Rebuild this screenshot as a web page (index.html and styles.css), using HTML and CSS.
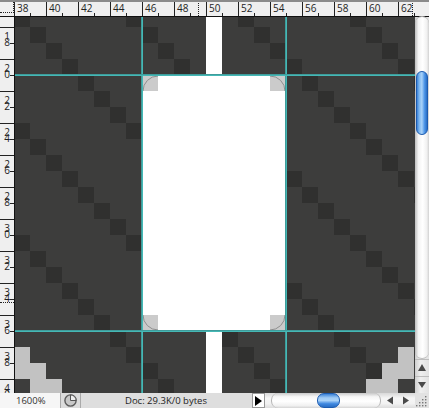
FILE: index.html
```html
<!DOCTYPE html>
<html lang="en">
<head>
<meta charset="utf-8">
<title>Document window</title>
<link rel="stylesheet" href="styles.css">
</head>
<body>
<div class="window">
  <div class="ruler-top">
    <div class="corner"></div>
    <div class="ruler-h">
      <span class="hm">38</span><span class="hm">40</span><span class="hm">42</span><span class="hm">44</span><span class="hm">46</span><span class="hm">48</span><span class="hm">50</span><span class="hm">52</span><span class="hm">54</span><span class="hm">56</span><span class="hm">58</span><span class="hm">60</span><span class="hm">62</span>
      <i class="cursor-h"></i>
      <i class="cursor-h end"></i>
    </div>
  </div>
  <div class="middle">
    <div class="ruler-v">
      <span class="vm"><b>18</b></span><span class="vm"><b>20</b></span><span class="vm"><b>22</b></span><span class="vm"><b>24</b></span><span class="vm"><b>26</b></span><span class="vm"><b>28</b></span><span class="vm"><b>30</b></span><span class="vm"><b>32</b></span><span class="vm"><b>34</b></span><span class="vm"><b>36</b></span><span class="vm"><b>38</b></span><span class="vm"><b>40</b></span>
      <i class="cursor-v"></i>
    </div>
    <div class="canvas">
      <svg class="art" width="400" height="376" viewBox="0 0 400 376" aria-hidden="true">
        <defs>
          <pattern id="diag" x="-1" y="-6" width="112" height="112" patternUnits="userSpaceOnUse">
            <rect x="0" y="0" width="16" height="16"/>
            <rect x="16" y="16" width="16" height="16"/>
            <rect x="32" y="32" width="16" height="16"/>
            <rect x="48" y="48" width="16" height="16"/>
            <rect x="64" y="64" width="16" height="16"/>
            <rect x="80" y="80" width="16" height="16"/>
            <rect x="96" y="96" width="16" height="16"/>
          </pattern>
        </defs>
        <rect class="base" width="400" height="376"/>
        <rect class="dark" width="400" height="376" fill="url(#diag)"/>
        <rect class="paper" x="191" y="-6" width="16" height="64"/>
        <rect class="paper" x="191" y="314" width="16" height="64"/>
        <rect class="paper" x="127" y="58" width="144" height="256"/>
        <g class="corners">
          <rect x="127" y="58" width="16" height="16"/>
          <rect x="255" y="58" width="16" height="16"/>
          <rect x="127" y="298" width="16" height="16"/>
          <rect x="255" y="298" width="16" height="16"/>
        </g>
        <g class="stairs">
          <rect x="0" y="330" width="15" height="32"/>
          <rect x="15" y="346" width="16" height="32"/>
          <rect x="31" y="362" width="16" height="16"/>
          <rect x="383" y="330" width="16" height="32"/>
          <rect x="367" y="346" width="16" height="32"/>
          <rect x="351" y="362" width="16" height="16"/>
        </g>
        <g class="arc">
          <path d="M128 74 A15 15 0 0 1 143 59"/>
          <path d="M255 59 A15 15 0 0 1 270 74"/>
          <path d="M128 298 A15 15 0 0 0 143 313"/>
          <path d="M255 313 A15 15 0 0 0 270 298"/>
        </g>
      </svg>
      <i class="guide gv g1"></i>
      <i class="guide gv g2"></i>
      <i class="guide gh g3"></i>
      <i class="guide gh g4"></i>
    </div>
    <div class="vscroll">
      <div class="vtrack">
        <div class="vthumb"></div>
      </div>
      <div class="varrow">
        <svg width="14" height="16" viewBox="0 0 14 16" aria-hidden="true"><path class="arrow" d="M7 4 L11 11 H3 Z"/></svg>
      </div>
      <div class="varrow">
        <svg width="14" height="16" viewBox="0 0 14 16" aria-hidden="true"><path class="arrow" d="M3 5 H11 L7 11 Z"/></svg>
      </div>
    </div>
  </div>
  <div class="status">
    <div class="zoom">1600%</div>
    <div class="clock">
      <svg width="15" height="15" viewBox="0 0 15 15" aria-hidden="true">
        <circle class="clock-face" cx="7.5" cy="7.5" r="5.6"/>
        <path class="clock-hand" d="M7.5 7.5 V1.9 A5.6 5.6 0 0 1 13.1 7.5 Z"/>
      </svg>
    </div>
    <div class="doc">Doc: 29.3K/0 bytes</div>
    <div class="menu-btn">
      <svg width="7" height="10" viewBox="0 0 7 10" aria-hidden="true"><path d="M0 0 L7 5 L0 10 Z"/></svg>
    </div>
    <div class="hscroll">
      <div class="htrack"><div class="hthumb"></div></div>
      <div class="harrows">
        <svg width="30" height="15" viewBox="0 0 30 15" aria-hidden="true">
          <path class="arrow" d="M2 7.5 L8 3.5 V11.5 Z"/>
          <path class="arrow" d="M18 3.5 L24 7.5 L18 11.5 Z"/>
        </svg>
      </div>
    </div>
    <div class="grip">
      <svg width="14" height="15" viewBox="0 0 14 15" aria-hidden="true">
        <g class="grip-dots">
          <rect x="10" y="3" width="1.4" height="1.4"/>
          <rect x="7" y="6" width="1.4" height="1.4"/><rect x="10" y="6" width="1.4" height="1.4"/>
          <rect x="4" y="9" width="1.4" height="1.4"/><rect x="7" y="9" width="1.4" height="1.4"/><rect x="10" y="9" width="1.4" height="1.4"/>
          <rect x="1" y="12" width="1.4" height="1.4"/><rect x="4" y="12" width="1.4" height="1.4"/><rect x="7" y="12" width="1.4" height="1.4"/><rect x="10" y="12" width="1.4" height="1.4"/>
        </g>
      </svg>
    </div>
  </div>
</div>
</body>
</html>
```
FILE: styles.css
```css
* { box-sizing: border-box; }
html, body { margin: 0; padding: 0; }
body { width: 429px; height: 408px; overflow: hidden; background: #e4e4e4; font-family: "Open Sans", sans-serif; color: #222; }
.window { width: 429px; height: 408px; display: flex; flex-direction: column; }

.ruler-top { height: 17px; display: flex; background: #efefef; border-top: 2px solid #8a8a8a; border-bottom: 1px solid #111; flex: none; }
.corner { width: 14px; flex: none; border-bottom: 1px dotted #222; border-right: 1px dotted #222; height: 11px; }
.ruler-h { flex: 1; display: flex; position: relative; overflow: hidden; }
.hm { flex: none; width: 32px; height: 14px; border-left: 1px solid #222; padding-left: 2px; font-size: 10px; line-height: 13px; position: relative; }
.hm::after { content: ""; position: absolute; left: 15px; bottom: 0; width: 1px; height: 3px; background: #222; }
.cursor-h { position: absolute; left: 184px; top: 1px; height: 13px; border-left: 1px dotted #222; }
.cursor-h.end { left: 398px; }

.middle { flex: 1; display: flex; min-height: 0; }
.ruler-v { width: 15px; flex: none; background: #efefef; border-right: 1px solid #111; padding-top: 10px; position: relative; overflow: hidden; }
.vm { display: block; height: 32px; border-top: 1px solid #222; padding: 1px 0 0 2px; font-size: 10px; position: relative; }
.vm b { display: block; font-weight: normal; writing-mode: vertical-rl; text-orientation: upright; letter-spacing: -8.5px; line-height: 10px; }
.vm::after { content: ""; position: absolute; right: 0; top: 15px; width: 4px; height: 1px; background: #222; }
.cursor-v { position: absolute; left: 0; top: 285px; width: 14px; border-top: 1px dotted #222; }

.canvas { width: 400px; flex: none; position: relative; overflow: hidden; }
.art { display: block; }
.base { fill: #3d3d3c; }
#diag rect { fill: #30302f; }
.paper { fill: #fff; }
.corners rect { fill: #cbcbcb; }
.stairs rect { fill: #c2c2c2; }
.arc path { fill: none; stroke: #8f8f8f; stroke-width: 1; }
.guide { position: absolute; }
.gv { top: 0; bottom: 0; width: 2px; background: linear-gradient(90deg, #3f9c9b 50%, #45b8b5 50%); }
.gh { left: 0; right: 0; height: 2px; background: linear-gradient(180deg, #3f9c9b 50%, #45b8b5 50%); }
.g1 { left: 126px; }
.g2 { left: 270px; }
.g3 { top: 57px; }
.g4 { top: 313px; }

.vscroll { width: 14px; flex: none; display: flex; flex-direction: column; background: linear-gradient(90deg, #cfcfcf, #efefef 40%, #e2e2e2); }
.vtrack { flex: 1; position: relative; background: linear-gradient(90deg, #bdbdbd, #f4f4f4 25%, #fff 55%, #f0f0f0 85%, #d0d0d0); border-radius: 7px; border-top: 1px solid #b0b0b0; margin-top: -1px; border-bottom: 1px solid #bdbdbd; }
.vthumb { position: absolute; left: 1px; right: 1px; top: 54px; height: 64px; border-radius: 6px; border: 1px solid #1d5cb0; background: linear-gradient(90deg, #3b82d8, #7db7f0 22%, #a9d2f8 48%, #4e96e8 75%, #2a6ec4); }
.varrow { height: 17px; flex: none; border-top: 1px solid #bdbdbd; }
.varrow svg { display: block; }
.arrow { fill: #4a4a4a; }

.status { height: 15px; flex: none; display: flex; align-items: stretch; background: #dedede; font-size: 9.5px; line-height: 15px; }
.zoom { width: 60px; flex: none; background: #f6f6f6; padding-left: 16px; color: #333; }
.clock { width: 21px; flex: none; display: flex; align-items: center; justify-content: center; border-left: 1px solid #aaa; border-right: 1px solid #aaa; background: #dcdcdc; }
.clock-face { fill: #c8c8c8; stroke: #5c5c5c; stroke-width: 1.4; }
.clock-hand { fill: #eee; stroke: #555; stroke-width: 1; }
.doc { width: 171px; flex: none; padding-left: 44px; white-space: nowrap; color: #222; }
.menu-btn { width: 13px; flex: none; background: #fff; border: 1px solid #999; display: flex; align-items: center; justify-content: center; }
.hscroll { flex: 1; display: flex; background: linear-gradient(180deg, #d8d8d8, #f6f6f6 35%, #f2f2f2 70%, #dcdcdc); padding-left: 6px; }
.htrack { flex: 1; position: relative; background: linear-gradient(180deg, #c8c8c8, #f6f6f6 25%, #fff 55%, #f0f0f0 85%, #d4d4d4); border-radius: 7px; border-left: 1px solid #b4b4b4; border-right: 1px solid #b4b4b4; }
.hthumb { position: absolute; left: 45px; top: 0; width: 23px; height: 15px; border-radius: 7px; border: 1px solid #1d5cb0; background: linear-gradient(180deg, #3b82d8, #9fcbf5 30%, #a9d2f8 50%, #3f88e0 75%, #2a6ec4); }
.harrows { width: 34px; flex: none; display: flex; align-items: center; padding-left: 4px; }
.grip { width: 14px; flex: none; background: #e2e2e2; }
.grip svg { display: block; }
.grip-dots rect { fill: #777; }
```
